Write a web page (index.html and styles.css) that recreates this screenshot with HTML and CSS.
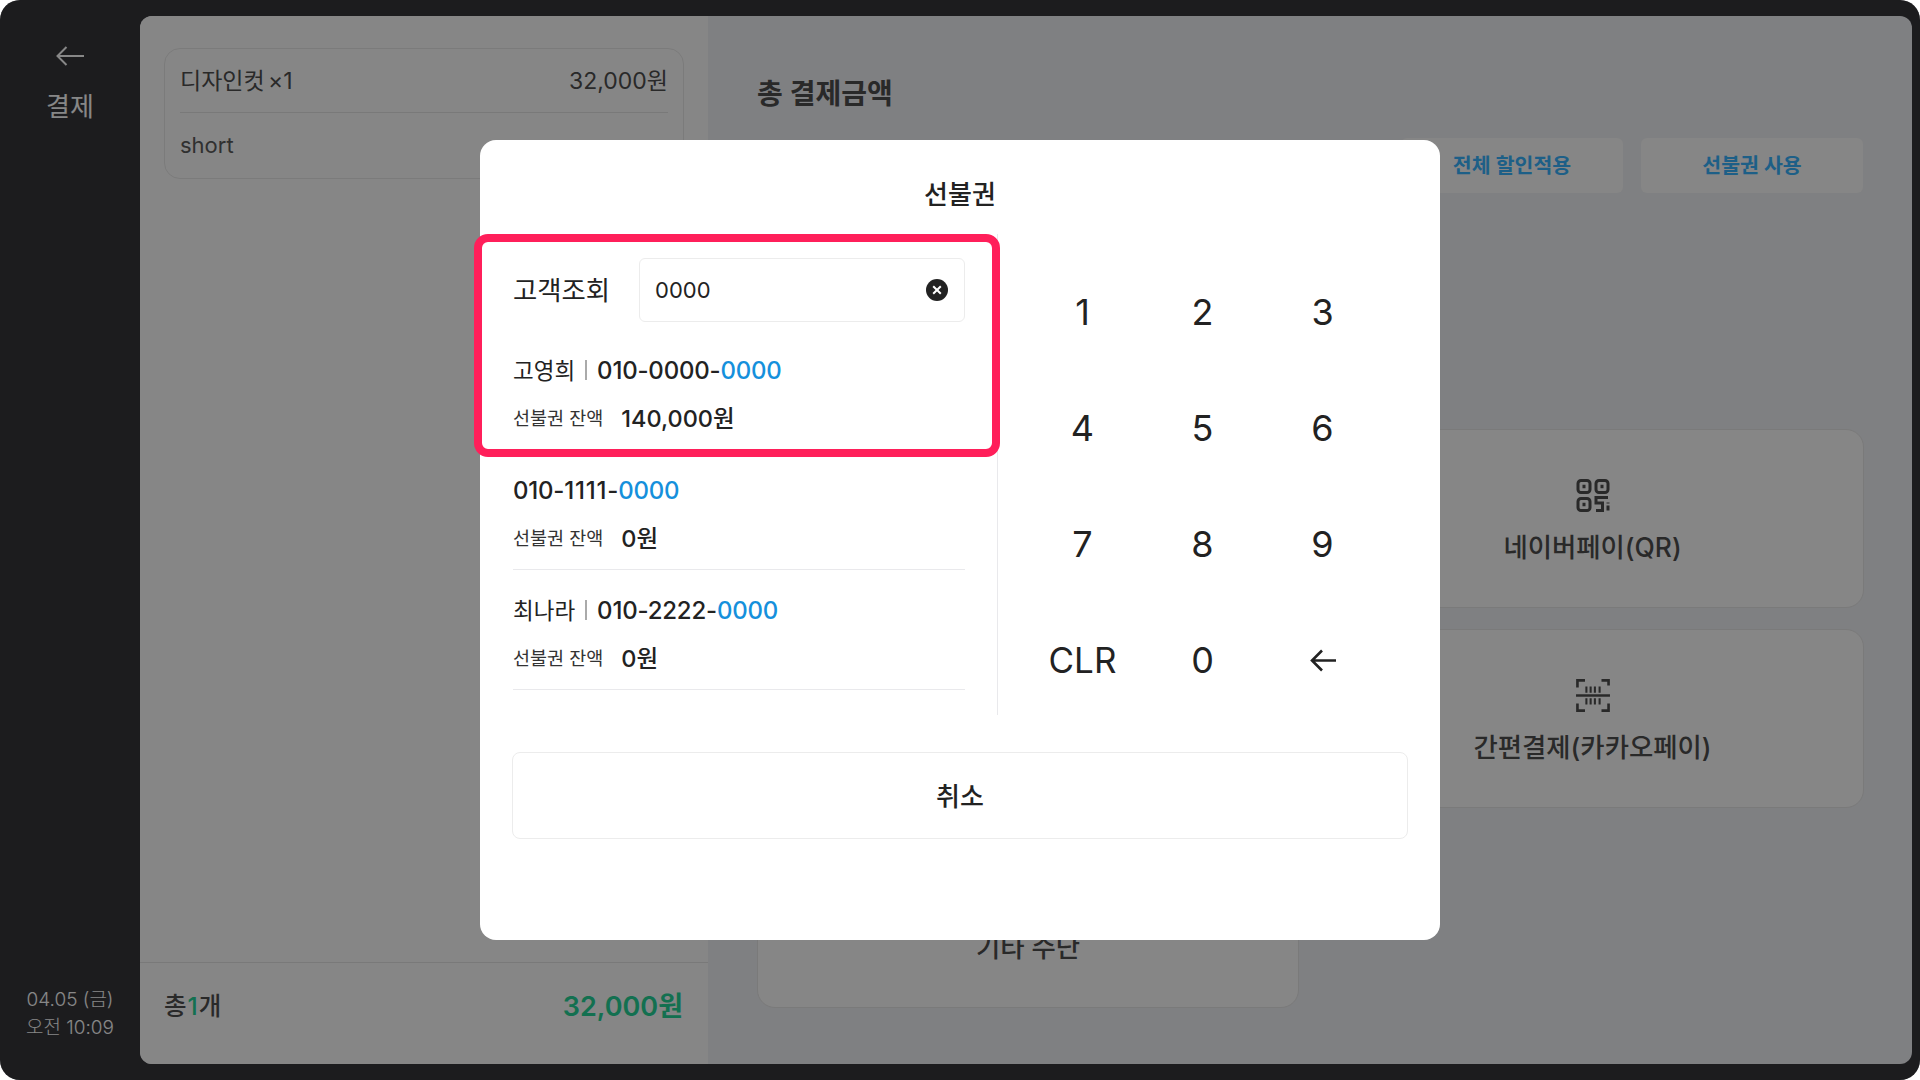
FILE: index.html
```html
<!DOCTYPE html>
<html lang="ko">
<head>
<meta charset="utf-8">
<title>결제</title>
<link rel="stylesheet" href="styles.css">
</head>
<body>
<div class="frame">
  <aside class="sidebar">
    <div class="side-top">
      <svg class="side-arrow" viewBox="0 0 28 20" fill="none" stroke="currentColor" stroke-width="2"><path d="M10.500 1 1.500 10l9 9M1.500 10H28"/></svg>
      <div class="side-title">결제</div>
    </div>
    <div class="side-clock"><div>04.05 (금)</div><div>오전 10:09</div></div>
  </aside>
  <main class="main">
    <section class="order">
      <div class="order-card">
        <div class="order-row"><span class="order-name">디자인컷 ×1</span><span>32,000원</span></div>
        <div class="order-note">short</div>
      </div>
      <div class="order-total">
        <div class="total-count">총<b>1</b>개</div>
        <div class="total-price">32,000원</div>
      </div>
    </section>
    <section class="pay">
      <h1 class="pay-title">총 결제금액</h1>
      <div class="pay-actions">
        <div class="pay-action">전체 할인적용</div>
        <div class="pay-action">선불권 사용</div>
      </div>
      <div class="pay-grid">
        <div class="pay-card"></div>
        <div class="pay-card">
          <svg class="pay-icon" viewBox="0 0 33 33" fill="none" stroke="currentColor" stroke-width="3"><rect x="1.500" y="1.500" width="12" height="12" rx="3"/><rect x="19.500" y="1.500" width="12" height="12" rx="3"/><rect x="1.500" y="19.500" width="12" height="12" rx="3"/><path d="M6 7.500h3M24 7.500h3M6 25.500h3" stroke-width="3.500"/><path d="M31.500 18.500H19.500v5.500H26v7.500h-6.500M31.500 23.500v1M31.500 26.500v5"/></svg>
          <div class="pay-label">네이버페이(QR)</div>
        </div>
        <div class="pay-card"></div>
        <div class="pay-card">
          <svg class="pay-icon" viewBox="0 0 36 35" fill="none" stroke="currentColor" stroke-width="2.200"><path d="M1.500 9V1.500h8M27 1.500h7.500V7M1.500 26v7.500h8M27 33.500h7.500V26" stroke-width="2.800"/><path d="M0 17.500h36" stroke-width="2.800"/><path d="M11 8v6.500M15.500 8v6.500M20 8v6.500M25 8v6.500M11 20.500V27M15.500 20.500V27M20 20.500V27M25 20.500V27"/></svg>
          <div class="pay-label">간편결제(카카오페이)</div>
        </div>
        <div class="pay-card pay-card-plain"><div class="pay-label">기타 수단</div></div>
      </div>
    </section>
  </main>
  <div class="overlay">
    <div class="modal">
      <h2 class="modal-title">선불권</h2>
      <div class="modal-body">
        <div class="lookup">
          <div class="search">
            <span class="search-label">고객조회</span>
            <div class="search-box">
              <span>0000</span>
              <svg class="search-clear" viewBox="0 0 22 22"><circle cx="11" cy="11" r="11" fill="#222"/><path d="M7.200 7.200l7.600 7.600M14.800 7.200l-7.600 7.600" stroke="#fff" stroke-width="2" fill="none"/></svg>
            </div>
          </div>
          <div class="customer">
            <div class="customer-id"><span class="customer-name">고영희</span><i class="customer-sep"></i><span class="customer-phone">010-0000-<em>0000</em></span></div>
            <div class="customer-balance"><span>선불권 잔액</span><strong>140,000원</strong></div>
          </div>
          <div class="customer">
            <div class="customer-id"><span class="customer-phone">010-<span class="phone-ones">1111</span>-<em>0000</em></span></div>
            <div class="customer-balance"><span>선불권 잔액</span><strong>0원</strong></div>
          </div>
          <div class="customer">
            <div class="customer-id"><span class="customer-name">최나라</span><i class="customer-sep"></i><span class="customer-phone">010-2222-<em>0000</em></span></div>
            <div class="customer-balance"><span>선불권 잔액</span><strong>0원</strong></div>
          </div>
        </div>
        <div class="keypad">
          <div class="key">1</div><div class="key">2</div><div class="key">3</div>
          <div class="key">4</div><div class="key">5</div><div class="key">6</div>
          <div class="key">7</div><div class="key">8</div><div class="key">9</div>
          <div class="key key-text">CLR</div><div class="key">0</div>
          <div class="key"><svg class="key-arrow" viewBox="0 0 26 25" fill="none" stroke="currentColor" stroke-width="2.600"><path d="M12 2.500 2 12.500l10 10M2 12.500h24"/></svg></div>
        </div>
      </div>
      <div class="cancel">취소</div>
      <div class="highlight"></div>
    </div>
  </div>
</div>
</body>
</html>
```
FILE: styles.css
```css
* { box-sizing: border-box; }
html, body { margin: 0; height: 100%; background: #fff; }
body { font-family: Inter, "Noto Sans CJK KR", sans-serif; color: #222; }

.frame {
  position: relative;
  width: 1920px;
  height: 1080px;
  display: flex;
  background: #35353a;
  border-radius: 20px;
  overflow: hidden;
}

.sidebar {
  width: 140px;
  flex: none;
  display: flex;
  flex-direction: column;
  justify-content: space-between;
  align-items: center;
  padding: 46px 0 38px;
  color: #fff;
}
.side-top { display: flex; flex-direction: column; align-items: center; }
.side-arrow { width: 28px; height: 20px; display: block; }
.side-title { margin-top: 25px; font-size: 26px; line-height: 32px; }
.side-clock { font-size: 19px; line-height: 28px; text-align: center; font-weight: 300; white-space: nowrap; }

.main {
  flex: 1;
  margin: 16px 8px 16px 0;
  display: flex;
  border-radius: 12px;
  overflow: hidden;
  background: #f0f1f5;
  color: #4f4f4f;
}

.order {
  width: 568px;
  flex: none;
  display: flex;
  flex-direction: column;
  justify-content: space-between;
  background: #fdfdfd;
}
.order-card {
  margin: 32px 24px 0 24px;
  height: 131px;
  padding: 0 15px;
  border: 1px solid #e8e8e8;
  border-radius: 16px;
}
.order-row {
  height: 64px;
  padding-bottom: 4px;
  display: flex;
  justify-content: space-between;
  align-items: center;
  font-size: 23px;
  border-bottom: 1px solid #e4e4e4;
}
.order-name { word-spacing: -3px; }
.order-note { height: 65px; padding-bottom: 2px; display: flex; align-items: center; font-size: 22px; color: #5c5c5c; }
.order-total {
  height: 102px;
  padding: 0 25px 18px 24px;
  display: flex;
  justify-content: space-between;
  align-items: center;
  border-top: 1px solid #e4e4e4;
}
.total-count { font-size: 24.500px; font-weight: 500; }
.total-count b { margin: 0 1px; font-weight: 500; color: #24d498; }
.total-price { font-size: 27px; font-weight: 600; color: #24d498; }

.pay { flex: 1; min-width: 0; padding: 58px 48px 0 49px; }
.pay-title { margin: 0; font-size: 28px; line-height: 40px; font-weight: 600; }
.pay-actions { margin: 24px 1px 0 0; display: flex; justify-content: flex-end; gap: 18px; }
.pay-action {
  width: 222px;
  height: 55px;
  padding-bottom: 4px;
  display: flex;
  align-items: center;
  justify-content: center;
  background: #fdfdfd;
  border-radius: 6px;
  font-size: 20.500px;
  font-weight: 600;
  color: #38b4ff;
}
.pay-grid {
  margin-top: 236px;
  display: grid;
  grid-template-columns: 542px 543px;
  grid-auto-rows: 179px;
  gap: 21px 22px;
}
.pay-card {
  display: flex;
  flex-direction: column;
  align-items: center;
  padding-top: 49px;
  background: #fdfdfd;
  border: 1px solid #e6e6e6;
  border-radius: 18px;
}
.pay-card-plain { padding-top: 101px; }
.pay-icon { width: 34px; height: 33px; margin-bottom: 19px; display: block; color: #4f4f4f; }
.pay-label { font-size: 26.400px; line-height: 32px; font-weight: 500; white-space: nowrap; }

.overlay {
  position: absolute;
  inset: 0;
  display: flex;
  align-items: center;
  justify-content: center;
  background: rgba(0, 0, 0, 0.47);
}
.modal {
  position: relative;
  width: 960px;
  height: 800px;
  padding: 0 32px;
  background: #fff;
  border-radius: 16px;
  color: #222;
}
.modal-title {
  margin: 0;
  height: 94px;
  padding-top: 37px;
  text-align: center;
  font-size: 26px;
  line-height: 36px;
  font-weight: 500;
}
.modal-body { display: flex; align-items: flex-start; }

.lookup {
  width: 486px;
  height: 481px;
  flex: none;
  padding: 24px 32px 0 1px;
  border-right: 1px solid #e9e9ec;
}
.search { height: 64px; margin-bottom: 8px; display: flex; align-items: center; justify-content: space-between; }
.search-label { margin-bottom: 4px; font-size: 26.400px; }
.search-box {
  width: 326px;
  height: 64px;
  padding: 0 16px 0 15px;
  display: flex;
  align-items: center;
  justify-content: space-between;
  border: 1px solid #ececec;
  border-radius: 6px;
  font-size: 22px;
}
.search-clear { width: 22px; height: 22px; display: block; }
.customer { height: 120px; padding-top: 24px; border-bottom: 1px solid #e9e9ec; }
.customer-id { height: 32px; display: flex; align-items: center; }
.customer-name { margin-bottom: 2px; font-size: 22.500px; }
.customer-sep { width: 2px; height: 20px; margin: 0 10px 0 10px; background: #aaa; }
.customer-phone { font-size: 24px; font-weight: 550; letter-spacing: -0.2px; }
.customer-phone em { font-style: normal; color: #1590dc; }
.phone-ones { letter-spacing: 0.8px; }
.customer-balance { height: 32px; margin-top: 15px; display: flex; align-items: center; gap: 18px; font-size: 18.500px; color: #333; }
.customer-balance strong { font-size: 23.500px; font-weight: 550; color: #222; }

.keypad {
  flex: 1;
  padding: 20px 1px 0 0;
  display: grid;
  grid-template-columns: repeat(3, 120px);
  grid-auto-rows: 116px;
  justify-content: center;
}
.key { display: flex; align-items: center; justify-content: center; font-size: 36px; }
.key-text { font-size: 35px; }
.key-arrow { width: 26px; height: 25px; margin-top: 1px; display: block; }

.cancel {
  margin-top: 34px;
  height: 87px;
  padding-bottom: 2px;
  display: flex;
  align-items: center;
  justify-content: center;
  border: 1px solid #ececec;
  border-radius: 8px;
  font-size: 26px;
  font-weight: 500;
}

.highlight {
  position: absolute;
  left: -6px;
  top: 94px;
  width: 526px;
  height: 223px;
  border: 8px solid #ff1f5a;
  border-radius: 14px;
  pointer-events: none;
}
```
